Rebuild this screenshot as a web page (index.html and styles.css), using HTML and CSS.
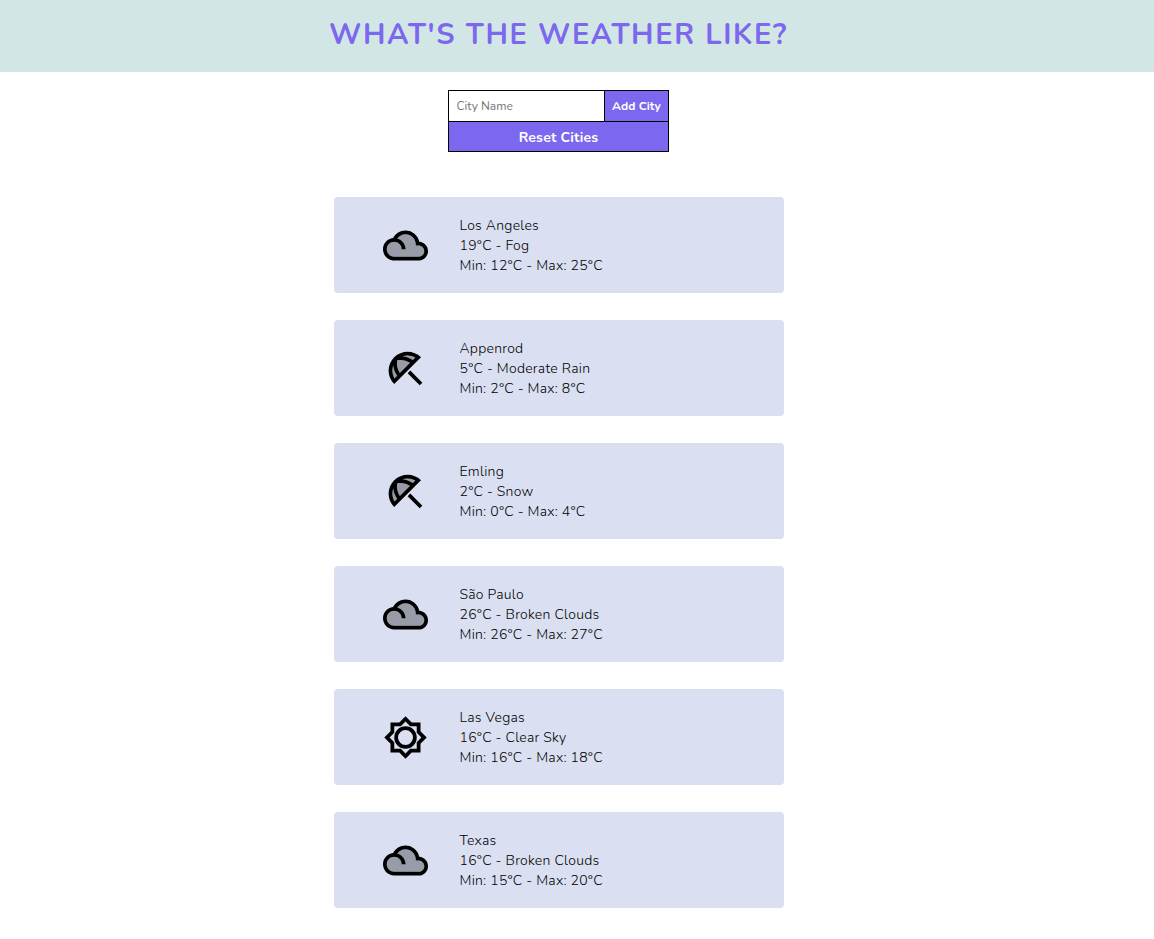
FILE: index.html
```html
<!DOCTYPE html>
<html lang="en">
<head>
<meta charset="utf-8">
<title>What's the weather like?</title>
<link rel="stylesheet" href="styles.css">
</head>
<body>
<svg class="sprite" aria-hidden="true">
<symbol id="cloud" viewBox="0 0 24 24"><path opacity=".3" d="M19 12h-1.5v-.5C17.500 8.470 15.030 6 12 6c-1.800 0-3.390.88-4.400 2.220C5 10 2 11 2 14c0 2.210 1.790 4 4 4h13c1.650 0 3-1.350 3-3s-1.350-3-3-3z"/><path d="M19.350 10.040C18.670 6.590 15.640 4 12 4 9.110 4 6.610 5.640 5.360 8.040 2.350 8.360 0 10.900 0 14c0 3.310 2.690 6 6 6h13c2.760 0 5-2.240 5-5 0-2.640-2.050-4.780-4.650-4.960zM19 18H6c-2.210 0-4-1.790-4-4s1.790-4 4-4 4 1.790 4 4h2c0-2.760-1.860-5.080-4.400-5.780C8.610 6.880 10.200 6 12 6c3.030 0 5.500 2.470 5.500 5.500v.5H19c1.650 0 3 1.350 3 3s-1.350 3-3 3z"/></symbol>
<symbol id="umbrella" viewBox="0 0 24 24"><path opacity=".3" d="M5.460 10.450C5.160 11.300 5 12.190 5 13.120c0 1.490.4 2.910 1.140 4.150l1.390-1.380c-1.180-1.650-1.880-3.530-2.070-5.440zM7.600 7.600c-.48 2.330.03 4.780 1.380 6.830l5.450-5.450C12.400 7.630 9.950 7.120 7.600 7.600zM13.120 5c-.92 0-1.810.16-2.660.46 1.910.19 3.790.89 5.440 2.070l1.370-1.400C16.040 5.400 14.610 5 13.120 5z"/><path d="M21 19.570l-1.427 1.428-6.442-6.442 1.430-1.428zM13.120 3c-2.580 0-5.160.98-7.140 2.950l-.01.01c-3.950 3.950-3.950 10.360 0 14.310l14.300-14.310C18.300 3.990 15.710 3 13.120 3zM6.140 17.270C5.400 16.030 5 14.610 5 13.120c0-.93.16-1.820.46-2.670.19 1.910.89 3.790 2.070 5.440l-1.390 1.380zm2.840-2.840C7.630 12.380 7.120 9.930 7.600 7.600c.58-.12 1.160-.18 1.750-.18 1.800 0 3.550.55 5.080 1.560l-5.450 5.450zm6.920-6.900c-1.650-1.180-3.530-1.880-5.440-2.070.85-.3 1.740-.46 2.660-.46 1.490 0 2.920.4 4.150 1.130l-1.370 1.400z"/></symbol>
<symbol id="sun" viewBox="0 0 24 24"><path d="M20 8.690V4h-4.690L12 .69 8.690 4H4v4.690L.69 12 4 15.310V20h4.690L12 23.310 15.310 20H20v-4.690L23.310 12 20 8.690zm-2 5.790V18h-3.520L12 20.480 9.520 18H6v-3.520L3.520 12 6 9.520V6h3.520L12 3.520 14.480 6H18v3.520L20.480 12 18 14.480z"/><circle cx="12" cy="12" r="5" fill="none" stroke="#000" stroke-width="2"/></symbol>
</svg>
<header class="header"><h1 class="title">WHAT'S THE WEATHER LIKE?</h1></header>
<main class="main">
<form class="form">
<div class="form-row"><input class="city-input" type="text" placeholder="City Name"><button class="add" type="button">Add City</button></div>
<button class="reset" type="button">Reset Cities</button>
</form>
<section class="cities">
<article class="card"><svg class="icon"><use href="#cloud"/></svg><div class="info"><p>Los Angeles</p><p>19°C - Fog</p><p>Min: 12°C - Max: 25°C</p></div></article>
<article class="card"><svg class="icon"><use href="#umbrella"/></svg><div class="info"><p>Appenrod</p><p>5°C - Moderate Rain</p><p>Min: 2°C - Max: 8°C</p></div></article>
<article class="card"><svg class="icon"><use href="#umbrella"/></svg><div class="info"><p>Emling</p><p>2°C - Snow</p><p>Min: 0°C - Max: 4°C</p></div></article>
<article class="card"><svg class="icon"><use href="#cloud"/></svg><div class="info"><p>São Paulo</p><p>26°C - Broken Clouds</p><p>Min: 26°C - Max: 27°C</p></div></article>
<article class="card"><svg class="icon"><use href="#sun"/></svg><div class="info"><p>Las Vegas</p><p>16°C - Clear Sky</p><p>Min: 16°C - Max: 18°C</p></div></article>
<article class="card"><svg class="icon"><use href="#cloud"/></svg><div class="info"><p>Texas</p><p>16°C - Broken Clouds</p><p>Min: 15°C - Max: 20°C</p></div></article>
</section>
</main>
</body>
</html>
```
FILE: styles.css
```css
* { box-sizing: border-box; }
body {
  margin: 0;
  background: #fff;
  color: #000;
  font-family: Nunito, "Open Sans", sans-serif;
  overflow: hidden;
}
.sprite { display: none; }
.header {
  height: 72px;
  padding: 15px 0 0 329px;
  background: #d2e7e5;
}
.title {
  margin: 0;
  font-family: Nunito, Lato, sans-serif;
  font-size: 29px;
  line-height: 40px;
  font-weight: 700;
  letter-spacing: 1.65px;
  white-space: nowrap;
  color: #7b68ee;
}
.main {
  width: 450px;
  margin-left: 334px;
  padding-top: 18px;
}
.form {
  width: 221px;
  height: 62px;
  margin-left: 114px;
  border: 1px solid #000;
  display: flex;
  flex-direction: column;
}
.form-row {
  display: flex;
  height: 31px;
  border-bottom: 1px solid #000;
}
.city-input {
  width: 155px;
  padding: 0 7.5px;
  border: 0;
  font: 12px/30px Nunito, "Open Sans", sans-serif;
}
.city-input::placeholder { color: #757575; }
.add, .reset {
  padding: 0;
  border: 0;
  background: #7b68ee;
  color: #fff;
  font-family: Nunito, "Open Sans", sans-serif;
}
.add {
  flex: 1;
  border-left: 1px solid #000;
  font-size: 12px;
  font-weight: 700;
}
.reset {
  height: 29px;
  padding-top: 1px;
  font-size: 14px;
  font-weight: 700;
  letter-spacing: 0.2px;
}
.cities {
  display: flex;
  flex-direction: column;
  gap: 27px;
  margin-top: 45px;
}
.card {
  display: flex;
  align-items: center;
  height: 96px;
  padding-left: 49px;
  border-radius: 4px;
  background: #dadff1;
}
.icon {
  width: 45px;
  height: 45px;
}
.info {
  padding-top: 2px;
  margin-left: 31.5px;
  font-size: 14px;
  line-height: 20px;
  font-weight: 300;
  letter-spacing: 0.26px;
  white-space: nowrap;
}
.info p { margin: 0; }
```
